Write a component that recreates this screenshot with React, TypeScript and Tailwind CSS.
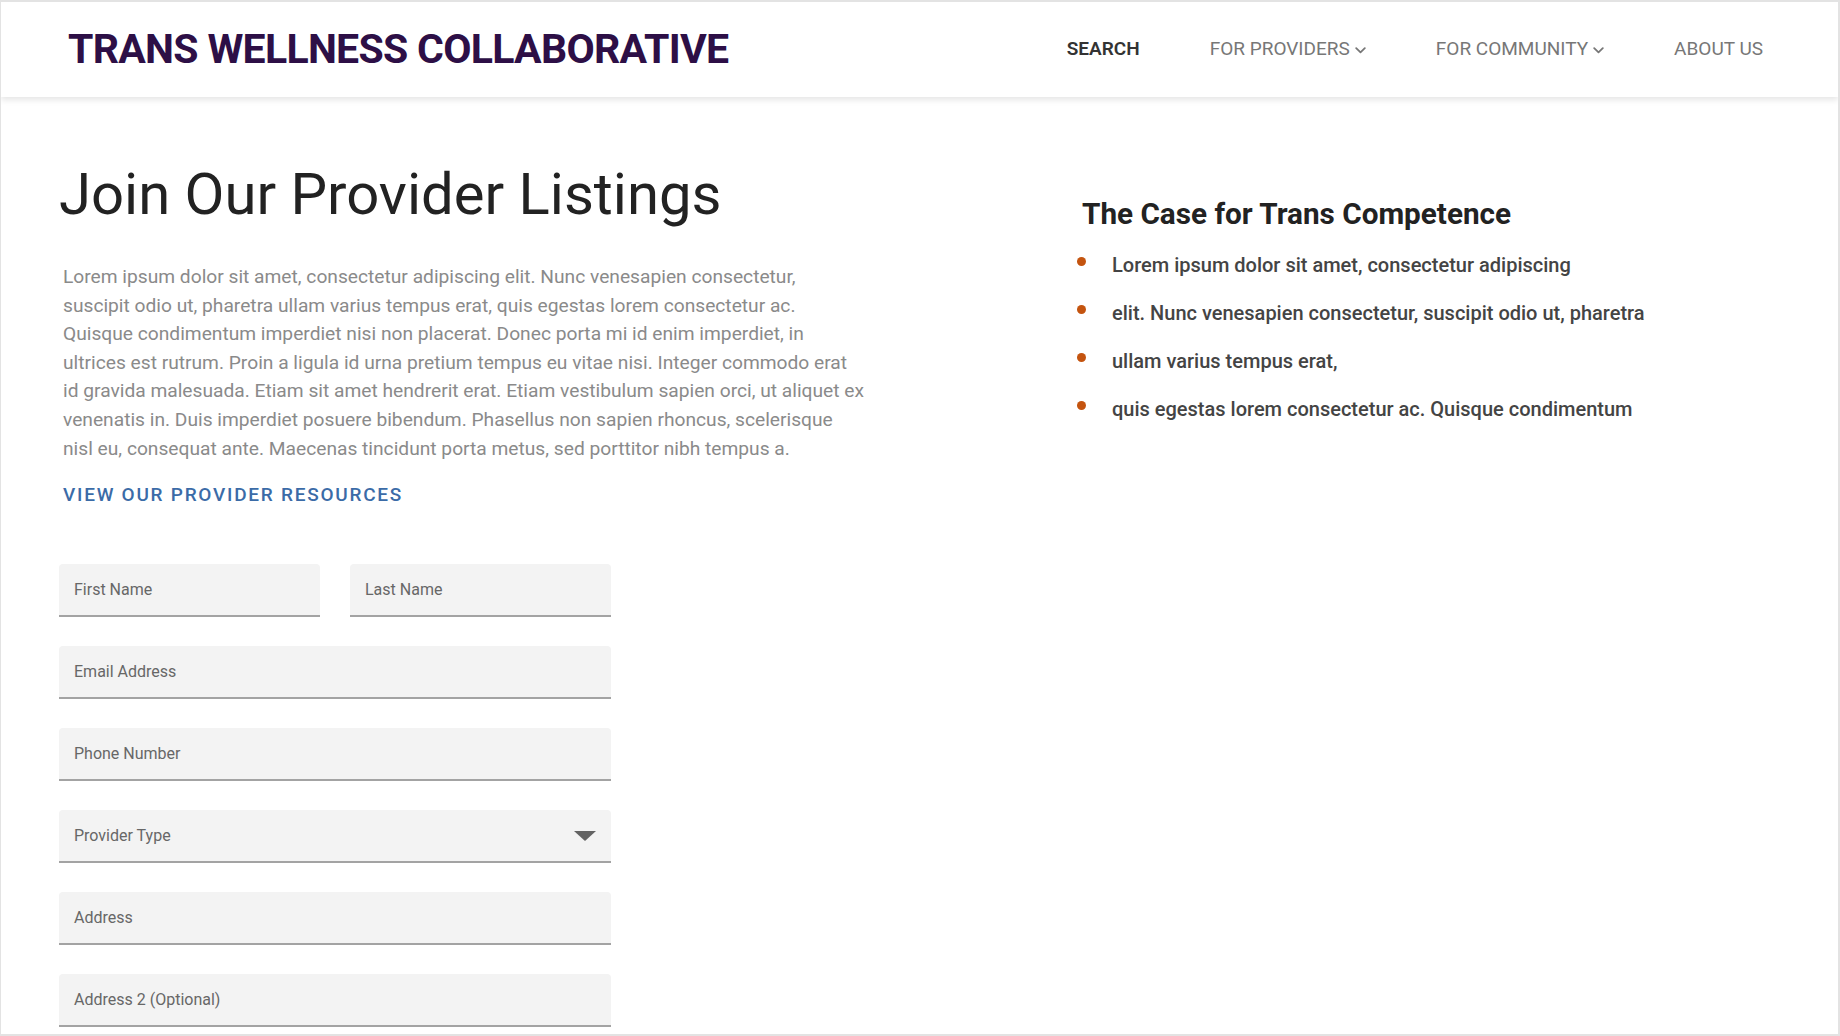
import React from "react";

const navChevron = (
  <svg width="11" height="7" viewBox="0 0 11 7" className="ml-[5px] mt-[1px]" fill="none">
    <path d="M1.2 1.2 L5.5 5.3 L9.8 1.2" stroke="#777777" strokeWidth="1.8" strokeLinecap="round" strokeLinejoin="round" />
  </svg>
);

function Field({ label, className = "", select = false }: { label: string; className?: string; select?: boolean }) {
  return (
    <div
      className={`flex h-[53px] items-center justify-between rounded-t-[4px] border-b-2 border-[#a3a3a3] bg-[#f3f3f3] pl-[15px] pr-[15px] ${className}`}
    >
      <span className="text-[16px] text-[#676767]">{label}</span>
      {select && (
        <svg width="22" height="10" viewBox="0 0 22 10">
          <polygon points="0,0 22,0 11,10" fill="#636363" />
        </svg>
      )}
    </div>
  );
}

const bullets = [
  "Lorem ipsum dolor sit amet, consectetur adipiscing",
  "elit. Nunc venesapien consectetur, suscipit odio ut, pharetra",
  "ullam varius tempus erat,",
  "quis egestas lorem consectetur ac. Quisque condimentum",
];

const paragraphLines = [
  "Lorem ipsum dolor sit amet, consectetur adipiscing elit. Nunc venesapien consectetur,",
  "suscipit odio ut, pharetra ullam varius tempus erat, quis egestas lorem consectetur ac.",
  "Quisque condimentum imperdiet nisi non placerat. Donec porta mi id enim imperdiet, in",
  "ultrices est rutrum. Proin a ligula id urna pretium tempus eu vitae nisi. Integer commodo erat",
  "id gravida malesuada. Etiam sit amet hendrerit erat. Etiam vestibulum sapien orci, ut aliquet ex",
  "venenatis in. Duis imperdiet posuere bibendum. Phasellus non sapien rhoncus, scelerisque",
  "nisl eu, consequat ante. Maecenas tincidunt porta metus, sed porttitor nibh tempus a.",
];

export default function App() {
  return (
    <div className="h-[1036px] w-[1840px] overflow-hidden border-2 border-l border-[#e3e3e3] bg-white font-['Roboto',sans-serif]">
      <header className="relative z-10 flex h-[95px] items-center justify-between bg-white pl-[67px] pr-[75px] shadow-[0_3px_6px_rgba(0,0,0,0.10)]">
        <div className="text-[41px] font-bold tracking-[-0.7px] text-[#2d0f46]">TRANS WELLNESS COLLABORATIVE</div>
        <nav className="flex items-center gap-[70px] text-[19px]">
          <span className="font-semibold text-[#333333]">SEARCH</span>
          <span className="flex items-center text-[#777777]">FOR PROVIDERS{navChevron}</span>
          <span className="flex items-center text-[#777777]">FOR COMMUNITY{navChevron}</span>
          <span className="text-[#777777]">ABOUT US</span>
        </nav>
      </header>

      <main className="flex">
        <section className="w-[1076px] shrink-0 pl-[58px]">
          <h1 className="mt-[68px] text-[58px] leading-none font-normal text-[#222222]">Join Our Provider Listings</h1>
          <p className="ml-[4px] mt-[40px] text-[19.2px] leading-[28.6px] text-[#8a8a8a]">
            {paragraphLines.map((l) => (
              <span key={l} className="block whitespace-nowrap">
                {l}
              </span>
            ))}
          </p>
          <a className="ml-[4px] mt-[20px] block text-[19px] leading-[24px] font-medium tracking-[1.75px] text-[#3b6ba7]">
            VIEW OUR PROVIDER RESOURCES
          </a>

          <form className="mt-[57px] flex w-[552px] flex-col gap-[29px]">
            <div className="flex gap-[30px]">
              <Field label="First Name" className="flex-1" />
              <Field label="Last Name" className="flex-1" />
            </div>
            <Field label="Email Address" />
            <Field label="Phone Number" />
            <Field label="Provider Type" select />
            <Field label="Address" />
            <Field label="Address 2 (Optional)" />
          </form>
        </section>

        <aside className="flex-1 pt-[99px]">
          <h2 className="ml-[5px] text-[29.7px] leading-[36px] font-bold text-[#222222]">The Case for Trans Competence</h2>
          <ul className="mt-[19px] flex flex-col gap-[20px]">
            {bullets.map((b) => (
              <li key={b} className="flex items-center text-[20px] leading-[28px] font-medium text-[#444444]">
                <span className="mb-[8px] h-[9px] w-[9px] shrink-0 rounded-full bg-[#c4540f]" />
                <span className="ml-[26px]">{b}</span>
              </li>
            ))}
          </ul>
        </aside>
      </main>
    </div>
  );
}
